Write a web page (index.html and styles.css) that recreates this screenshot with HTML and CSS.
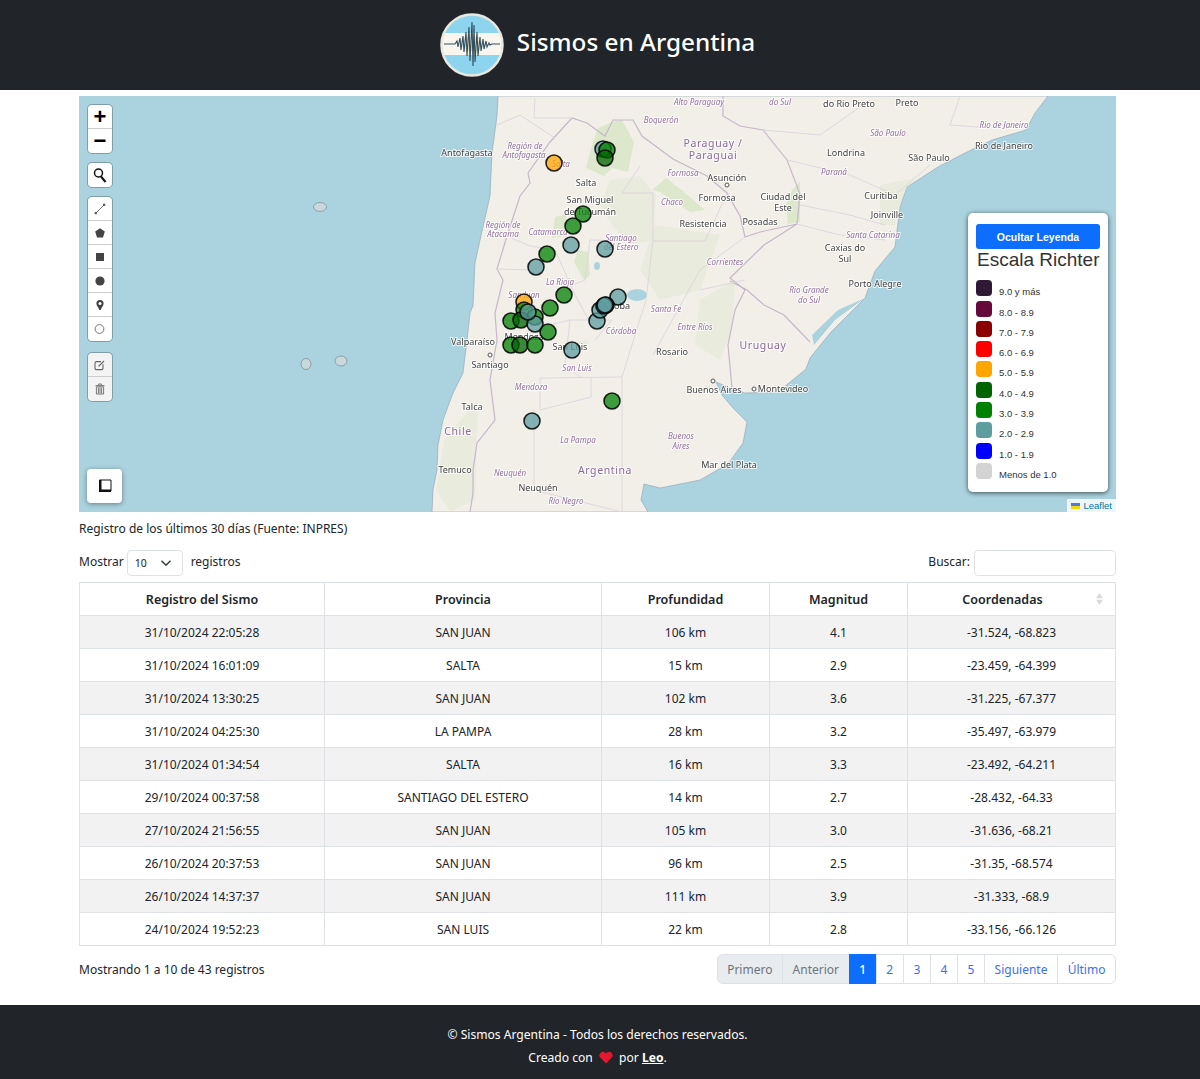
FILE: index.html
```html
<!DOCTYPE html>
<html lang="es">
<head>
  <meta charset="UTF-8">
  <meta name="viewport" content="width=device-width, initial-scale=1.0">
  <title>Sismos en Argentina</title>
  <link rel="stylesheet" href="styles.css">
</head>
<body>
  <header class="site-header">
    <svg class="logo" viewBox="0 0 64 64" width="64" height="64">
      <defs><clipPath id="logo-clip"><circle cx="32" cy="32" r="30"/></clipPath></defs>
      <g clip-path="url(#logo-clip)">
        <rect width="64" height="64" fill="#8dd4ee"/>
        <rect y="20" width="64" height="22" fill="#f8f6ee"/>
        <rect x="25" y="24" width="14" height="14" fill="#f2d9a8" opacity=".6"/>
      </g>
      <circle cx="32" cy="32" r="30.5" fill="none" stroke="#e8e8e0" stroke-width="2.5"/>
      <path d="M4 31H15L17 28L18 34L20 25L21 37L23 23L24 39L26 19L27 43L29 14L30 48L32 9L33 53L34 12L35 49L37 19L38 43L40 24L41 38L43 26L44 36L46 28L47 34L49 30L50 32L52 31H60" fill="none" stroke="#33505f" stroke-width="1.1"/>
    </svg>
    <h1 class="site-title">Sismos en Argentina</h1>
  </header>

  <main class="content">
    <div class="map">
      <svg class="map-base" viewBox="79 96 1037 416" width="1037" height="416">
        <rect x="79" y="96" width="1037" height="416" fill="#aad3df"/>
        <!-- tierra -->
        <path class="land" d="M498 96L497 116L492 153L490 196L480 240L475 263L473 306L470 313L467 340L463 373L453 393L443 420L438 445L437 470L433 490L432 512L648 512L641 500L644 484L660 488L700 480L728 464L743 443L747 422L733 408L722 395L716 382L730 388L745 393L778 392L806 369L810 358L831 332L865 298L875 271L895 247L900 207L907 187L938 167L965 153L992 140L1026 130L1035 113L1048 96Z"/>
        <!-- zonas verdes -->
        <path class="green" d="M598 128L612 122L622 120L634 142L628 172L612 168L604 176L586 168L592 145Z"/>
        <path class="green soft" d="M610 180L640 176L656 196L652 240L630 245L612 225L600 205Z"/>
        <path class="green" d="M652 190L666 178L684 192L705 210L690 212L660 192Z"/>
        <path class="green soft" d="M655 225L720 235L700 290L660 300L640 270Z"/>
        <path class="green" d="M555 217L566 214L566 236L552 238Z"/>
        <path class="green" d="M578 250L588 252L590 275L584 280L574 262Z"/>
        <path class="green soft" d="M700 300L735 280L732 330L720 360L695 345Z"/>
        <path class="green" d="M792 190L800 182L800 222L788 224L786 205Z"/>
        <path class="green soft" d="M880 185L915 178L905 192L895 225L880 225Z"/>
        <path class="green soft" d="M444 440L478 400L475 500L450 512L436 490Z"/>
        <path class="green soft" d="M565 345L588 340L585 350L570 352Z"/>
        <!-- limites -->
        <path class="border strong" d="M528 173L530 183L520 196L507 236L497 269L503 280L495 313L497 340L490 380L495 420L477 443L473 470L473 493L470 512"/>
        <path class="border strong" d="M528 173L550 142L572 118L587 123L605 136L613 120L633 120L642 136L673 159L707 176L727 193L740 216L745 237L760 232L797 224L764 245L730 278L745 290L735 310L728 345L732 388"/>
        <path class="border strong" d="M723 96L723 116L740 126L763 130L787 160L800 194L797 224M730 281L747 290L764 305L784 315L810 342"/>
        <path class="border" d="M497 125L520 115L555 138M535 98L534 118L572 118M622 193L653 193L653 241L705 241L727 193M622 193L640 166M653 241L646 300L622 377L622 512M622 377L540 378L540 410L591 397L591 377M534 410L534 490L622 512M581 378L565 365L570 320L612 320L595 340M560 290L585 280L590 240L625 241"/>
        <path class="border" d="M507 236L530 246L555 250L575 295L590 322M497 269L530 270M500 320L550 325L570 320M745 237L700 270L653 355M745 280L700 290"/>
        <path class="border" d="M763 130L820 135L870 100M787 160L850 175L895 195L930 165M800 205L850 215L885 225M797 224L840 235L885 240M960 96L950 125L990 128"/>
        <path class="water-line" d="M865 298L835 320L814 345L812 335L838 310Z"/>
        <ellipse class="lake" cx="637" cy="295" rx="10" ry="6"/>
        <ellipse class="lake" cx="597" cy="266" rx="3" ry="4"/>
        <ellipse class="island" cx="320" cy="207" rx="6.5" ry="4.5"/>
        <ellipse class="island" cx="306" cy="364" rx="5" ry="5.5"/>
        <ellipse class="island" cx="341" cy="361" rx="6" ry="5"/>
        <!-- etiquetas -->
        <g class="city">
          <text x="467" y="156">Antofagasta</text><text x="586" y="186">Salta</text>
          <text x="590" y="203">San Miguel</text><text x="590" y="215">de Tucumán</text>
          <text x="846" y="156">Londrina</text><text x="929" y="161">São Paulo</text>
          <text x="1004" y="149">Rio de Janeiro</text><text x="849" y="107">do Rio Preto</text>
          <text x="907" y="106">Preto</text><text x="727" y="181">Asunción</text>
          <text x="717" y="201">Formosa</text><text x="783" y="200">Ciudad del</text>
          <text x="783" y="211">Este</text><text x="703" y="227">Resistencia</text>
          <text x="760" y="225">Posadas</text><text x="881" y="199">Curitiba</text>
          <text x="887" y="218">Joinville</text><text x="845" y="251">Caxias do</text>
          <text x="845" y="262">Sul</text><text x="875" y="287">Porto Alegre</text>
          <text x="473" y="345">Valparaíso</text><text x="490" y="368">Santiago</text>
          <text x="472" y="410">Talca</text><text x="455" y="473">Temuco</text>
          <text x="538" y="491">Neuquén</text><text x="672" y="355">Rosario</text>
          <text x="714" y="393">Buenos Aires</text><text x="783" y="392">Montevideo</text>
          <text x="729" y="468">Mar del Plata</text><text x="524" y="340">Mendoza</text>
          <text x="570" y="350">San Luis</text><text x="612" y="309">Córdoba</text>
        </g>
        <g class="region">
          <text x="525" y="149">Región de</text><text x="524" y="158">Antofagasta</text>
          <text x="661" y="123">Boquerón</text><text x="699" y="105">Alto Paraguay</text>
          <text x="780" y="105">do Sul</text><text x="683" y="176">Formosa</text>
          <text x="672" y="205">Chaco</text><text x="503" y="228">Región de</text>
          <text x="503" y="237">Atacama</text><text x="548" y="235">Catamarca</text>
          <text x="621" y="241">Santiago</text><text x="621" y="250">del Estero</text>
          <text x="561" y="167">Salta</text><text x="560" y="285">La Rioja</text>
          <text x="524" y="298">San Juan</text><text x="531" y="390">Mendoza</text>
          <text x="577" y="371">San Luis</text><text x="621" y="334">Córdoba</text>
          <text x="666" y="312">Santa Fe</text><text x="695" y="330">Entre Ríos</text>
          <text x="578" y="443">La Pampa</text><text x="681" y="439">Buenos</text>
          <text x="681" y="449">Aires</text><text x="510" y="476">Neuquén</text>
          <text x="566" y="504">Río Negro</text><text x="888" y="136">São Paulo</text>
          <text x="834" y="175">Paraná</text><text x="1004" y="128">Rio de Janeiro</text>
          <text x="873" y="238">Santa Catarina</text><text x="809" y="293">Rio Grande</text>
          <text x="809" y="303">do Sul</text><text x="725" y="265">Corrientes</text>
        </g>
        <g class="country">
          <text x="713" y="147">Paraguay /</text><text x="713" y="159">Paraguai</text>
          <text x="458" y="435">Chile</text><text x="763" y="349">Uruguay</text>
          <text x="605" y="474">Argentina</text>
        </g>
        <circle class="dot" cx="713" cy="381" r="2"/><circle class="dot" cx="754" cy="389" r="2"/>
        <circle class="dot" cx="490" cy="355" r="2"/><circle class="dot" cx="727" cy="185" r="2"/>
        <!-- sismos -->
        <g class="quakes">
          <circle class="q2" cx="603" cy="149" r="8"/><circle class="q3" cx="607" cy="150" r="8"/>
          <circle class="q4" cx="605" cy="158" r="8"/><circle class="q5" cx="554" cy="163" r="8"/>
          <circle class="q3" cx="583" cy="214" r="8"/><circle class="q3" cx="573" cy="226" r="8"/>
          <circle class="q2" cx="571" cy="245" r="8"/><circle class="q2" cx="605" cy="249" r="8"/>
          <circle class="q3" cx="547" cy="254" r="8"/><circle class="q2" cx="536" cy="267" r="8"/>
          <circle class="q3" cx="564" cy="295" r="8"/><circle class="q5" cx="524" cy="302" r="8"/>
          <circle class="q2" cx="618" cy="297" r="8"/><circle class="q3" cx="550" cy="308" r="8"/>
          <circle class="q2" cx="597" cy="321" r="8"/><circle class="q2" cx="600" cy="310" r="8"/>
          <circle class="q2" cx="606" cy="305" r="8"/><circle class="q2" cx="604" cy="306" r="8"/>
          <circle class="q2" cx="605" cy="305" r="8"/><circle class="q3" cx="524" cy="310" r="8"/>
          <circle class="q3" cx="511" cy="321" r="8"/><circle class="q3" cx="535" cy="317" r="8"/>
          <circle class="q4" cx="521" cy="320" r="8"/><circle class="q2" cx="535" cy="324" r="8"/>
          <circle class="q2" cx="528" cy="312" r="8"/><circle class="q3" cx="548" cy="332" r="8"/>
          <circle class="q3" cx="511" cy="345" r="8"/><circle class="q4" cx="520" cy="345" r="8"/>
          <circle class="q3" cx="535" cy="345" r="8"/><circle class="q2" cx="572" cy="350" r="8"/>
          <circle class="q3" cx="612" cy="401" r="8"/><circle class="q2" cx="532" cy="421" r="8"/>
        </g>
      </svg>

      <div class="map-tools">
        <div class="tool-group">
          <a class="tool tool-zoom">+</a>
          <a class="tool tool-zoom">−</a>
        </div>
        <div class="tool-group">
          <a class="tool">
            <svg viewBox="0 0 16 16" width="16" height="16"><circle cx="6.5" cy="6" r="4" fill="none" stroke="#111" stroke-width="1.5"/><path d="M9 9.5L13.5 15" stroke="#111" stroke-width="2"/></svg>
          </a>
        </div>
        <div class="tool-group">
          <a class="tool"><svg viewBox="0 0 12 12" width="12" height="12"><path d="M1.5 10.5L10.5 1.5" stroke="#666" stroke-width=".9"/><rect x=".7" y="9" width="2.2" height="2.2" fill="#555"/><rect x="9" y=".7" width="2.2" height="2.2" fill="#555"/></svg></a>
          <a class="tool"><svg viewBox="0 0 12 12" width="12" height="12"><path d="M6 1.2L10.8 4.6L9 10.6H3L1.2 4.6Z" fill="#444"/></svg></a>
          <a class="tool"><svg viewBox="0 0 12 12" width="12" height="12"><rect x="2" y="2" width="8" height="8" fill="#444"/></svg></a>
          <a class="tool"><svg viewBox="0 0 12 12" width="12" height="12"><circle cx="6" cy="6" r="4.6" fill="#444"/></svg></a>
          <a class="tool"><svg viewBox="0 0 12 12" width="12" height="12"><path d="M6 1A3.6 3.6 0 0 1 9.6 4.6C9.6 7 7.3 8.5 6.7 11H5.3C4.7 8.5 2.4 7 2.4 4.6A3.6 3.6 0 0 1 6 1Z" fill="#444"/><circle cx="6" cy="4.5" r="1.5" fill="#fff"/></svg></a>
          <a class="tool"><svg viewBox="0 0 12 12" width="12" height="12"><circle cx="5.5" cy="6" r="4.4" fill="#fff" stroke="#777"/></svg></a>
        </div>
        <div class="tool-group tool-group-off">
          <a class="tool"><svg viewBox="0 0 12 12" width="12" height="12"><path d="M7 2.6H2.5A1.4 1.4 0 0 0 1 4V9.2A1.4 1.4 0 0 0 2.5 10.6H7.5A1.4 1.4 0 0 0 9 9.2V5.2" fill="none" stroke="#666" stroke-width="1.1"/><path d="M4.5 7.4L10 2" stroke="#666" stroke-width="1.3"/></svg></a>
          <a class="tool"><svg viewBox="0 0 12 12" width="12" height="12"><path d="M1.5 2.6H10.5M4.5 2.4V1H7.5V2.4M2.4 3.8H9.6V11H2.4ZM4.4 4.6V10.4M6 4.6V10.4M7.6 4.6V10.4" fill="none" stroke="#777"/></svg></a>
        </div>
      </div>

      <a class="corner-button">
        <svg viewBox="0 0 14 14" width="14" height="14"><path d="M1.5 1H13V12H1.5Z" fill="none" stroke="#111"/><path d="M1 1H3.5V10.5H13V13H1Z" fill="#111"/></svg>
      </a>

      <aside class="legend">
        <button class="legend-toggle">Ocultar Leyenda</button>
        <h4 class="legend-title">Escala Richter</h4>
        <ul class="legend-list">
          <li><i class="swatch sw-9"></i>9.0 y más</li>
          <li><i class="swatch sw-8"></i>8.0 - 8.9</li>
          <li><i class="swatch sw-7"></i>7.0 - 7.9</li>
          <li><i class="swatch sw-6"></i>6.0 - 6.9</li>
          <li><i class="swatch sw-5"></i>5.0 - 5.9</li>
          <li><i class="swatch sw-4"></i>4.0 - 4.9</li>
          <li><i class="swatch sw-3"></i>3.0 - 3.9</li>
          <li><i class="swatch sw-2"></i>2.0 - 2.9</li>
          <li><i class="swatch sw-1"></i>1.0 - 1.9</li>
          <li><i class="swatch sw-0"></i>Menos de 1.0</li>
        </ul>
      </aside>

      <div class="attribution">
        <svg viewBox="0 0 12 8" width="9" height="6"><rect width="12" height="4" fill="#4c7be1"/><rect y="4" width="12" height="4" fill="#ffd500"/></svg>
        <a>Leaflet</a>
      </div>
    </div>

    <p class="source">Registro de los últimos 30 días (Fuente: INPRES)</p>

    <div class="table-top">
      <div class="length">
        Mostrar
        <span class="select">10
          <svg viewBox="0 0 16 16" width="12" height="12"><path d="M2 5l6 6 6-6" fill="none" stroke="#343a40" stroke-width="2"/></svg>
        </span>
        registros
      </div>
      <div class="search">Buscar: <span class="search-box"></span></div>
    </div>

    <table class="quake-table">
      <colgroup>
        <col class="c1"><col class="c2"><col class="c3"><col class="c4"><col class="c5">
      </colgroup>
      <thead>
        <tr>
          <th>Registro del Sismo</th>
          <th>Provincia</th>
          <th>Profundidad</th>
          <th>Magnitud</th>
          <th class="sortable">Coordenadas
            <svg class="sort" viewBox="0 0 8 14" width="7" height="12"><path d="M4 0L8 6H0ZM4 14L0 8H8Z" fill="#d8dadd"/></svg>
          </th>
        </tr>
      </thead>
      <tbody>
        <tr><td>31/10/2024 22:05:28</td><td>SAN JUAN</td><td>106 km</td><td>4.1</td><td>-31.524, -68.823</td></tr>
        <tr><td>31/10/2024 16:01:09</td><td>SALTA</td><td>15 km</td><td>2.9</td><td>-23.459, -64.399</td></tr>
        <tr><td>31/10/2024 13:30:25</td><td>SAN JUAN</td><td>102 km</td><td>3.6</td><td>-31.225, -67.377</td></tr>
        <tr><td>31/10/2024 04:25:30</td><td>LA PAMPA</td><td>28 km</td><td>3.2</td><td>-35.497, -63.979</td></tr>
        <tr><td>31/10/2024 01:34:54</td><td>SALTA</td><td>16 km</td><td>3.3</td><td>-23.492, -64.211</td></tr>
        <tr><td>29/10/2024 00:37:58</td><td>SANTIAGO DEL ESTERO</td><td>14 km</td><td>2.7</td><td>-28.432, -64.33</td></tr>
        <tr><td>27/10/2024 21:56:55</td><td>SAN JUAN</td><td>105 km</td><td>3.0</td><td>-31.636, -68.21</td></tr>
        <tr><td>26/10/2024 20:37:53</td><td>SAN JUAN</td><td>96 km</td><td>2.5</td><td>-31.35, -68.574</td></tr>
        <tr><td>26/10/2024 14:37:37</td><td>SAN JUAN</td><td>111 km</td><td>3.9</td><td>-31.333, -68.9</td></tr>
        <tr><td>24/10/2024 19:52:23</td><td>SAN LUIS</td><td>22 km</td><td>2.8</td><td>-33.156, -66.126</td></tr>
      </tbody>
    </table>

    <div class="table-bottom">
      <div>Mostrando 1 a 10 de 43 registros</div>
      <nav class="pagination">
        <a class="disabled">Primero</a>
        <a class="disabled">Anterior</a>
        <a class="active">1</a>
        <a>2</a>
        <a>3</a>
        <a>4</a>
        <a>5</a>
        <a>Siguiente</a>
        <a>Último</a>
      </nav>
    </div>
  </main>

  <footer class="site-footer">
    <p>© Sismos Argentina - Todos los derechos reservados.</p>
    <p>Creado con
      <svg class="heart" viewBox="0 0 14 13" width="14" height="13"><path d="M7 12.5L1.2 6.6A3.5 3.5 0 0 1 6 1.6L7 2.6L8 1.6A3.5 3.5 0 0 1 12.8 6.6Z" fill="#e3172d"/></svg>
      por <a class="author">Leo</a>.</p>
  </footer>
</body>
</html>
```

FILE: styles.css
```css
* {
  box-sizing: border-box;
}
body {
  margin: 0;
  font-family: "Noto Sans", Arial, sans-serif;
  font-size: 12px;
  color: #212529;
  background-color: #fff;
}

/* cabecera */
.site-header {
  height: 90px;
  padding-right: 5px;
  display: flex;
  align-items: center;
  justify-content: center;
  gap: 13px;
  background-color: #212529;
}
.logo {
  flex: none;
}
.site-title {
  margin: 0 0 8px;
  font-size: 24.3px;
  font-weight: 500;
  color: #fff;
}

.content {
  margin: 6px 84px 0 79px;
}

/* mapa */
.map {
  position: relative;
  height: 416px;
  overflow: hidden;
}
.map-base {
  display: block;
  filter: blur(.4px);
}
.land {
  fill: #f2efe9;
  stroke: #8f9fb0;
  stroke-width: .6;
}
.green {
  fill: #d3e4bf;
  opacity: .7;
}
.green.soft {
  opacity: .3;
}
.border {
  fill: none;
  stroke: #ddd4dc;
  stroke-width: .9;
}
.border.strong {
  stroke: #c6b7ca;
  stroke-width: 1.2;
}
.water-line,
.lake {
  fill: #aad3df;
}
.island {
  fill: #c9d8da;
  stroke: #8f9fa8;
  stroke-width: 1;
}
.dot {
  fill: #fff;
  stroke: #555;
}
.city text,
.region text,
.country text {
  text-anchor: middle;
  paint-order: stroke;
  stroke: rgba(255, 255, 255, .75);
  stroke-width: 2px;
}
.city text {
  font-size: 9px;
  fill: #444;
}
.region text {
  font-size: 8px;
  font-style: italic;
  fill: #93719b;
}
.country text {
  font-size: 10.5px;
  letter-spacing: .6px;
  fill: #8a6a96;
}
.quakes circle {
  stroke: #000;
  stroke-width: 1.6;
  stroke-opacity: .85;
  fill-opacity: .75;
}
.q2 { fill: #5f9ea0; }
.q3 { fill: #008000; }
.q4 { fill: #006400; }
.q5 { fill: #ffa500; }

/* controles del mapa */
.map-tools {
  position: absolute;
  top: 9px;
  left: 9px;
  display: flex;
  flex-direction: column;
  gap: 10px;
}
.tool-group {
  width: 24px;
  border-radius: 4px;
  background-color: #fff;
  box-shadow: 0 0 0 1px rgba(0, 0, 0, .25);
}
.tool-group-off {
  margin-top: 2px;
  background-color: #f4f4f4;
}
.tool {
  height: 24px;
  display: flex;
  align-items: center;
  justify-content: center;
  border-bottom: 1px solid #ccc;
}
.tool:last-child {
  border-bottom: none;
}
.tool-zoom {
  font: bold 22px "Liberation Sans", Arial, sans-serif;
  color: #000;
}
.corner-button {
  position: absolute;
  left: 8px;
  bottom: 9px;
  width: 35px;
  height: 34px;
  display: flex;
  align-items: center;
  justify-content: center;
  border-radius: 4px;
  background-color: #fff;
  box-shadow: 0 1px 5px rgba(0, 0, 0, .4);
}
.legend {
  position: absolute;
  top: 117px;
  right: 8px;
  width: 140px;
  height: 279px;
  padding: 11px 8px;
  border-radius: 5px;
  background-color: #fff;
  box-shadow: 0 1px 5px rgba(0, 0, 0, .65);
  font-family: "Liberation Sans", Arial, sans-serif;
}
.legend-toggle {
  display: block;
  width: 124px;
  height: 25px;
  padding: 0;
  border: none;
  border-radius: 3px;
  background-color: #0d6efd;
  color: #fff;
  font: bold 10.5px "Liberation Sans", Arial, sans-serif;
}
.legend-title {
  margin: -1px 0 8px;
  padding-left: 1px;
  font-size: 19px;
  font-weight: 400;
  line-height: 24px;
  white-space: nowrap;
  color: #333;
}
.legend-list {
  margin: 0;
  padding: 0;
  list-style: none;
  font-size: 9.5px;
  color: #333;
}
.legend-list li {
  height: 20.3px;
  padding-bottom: 3px;
  display: flex;
  align-items: flex-end;
  gap: 7px;
  line-height: 10px;
}
.swatch {
  width: 16px;
  height: 16px;
  margin-bottom: 1px;
  border-radius: 4px;
}
.sw-9 { background-color: #301934; }
.sw-8 { background-color: #660a3c; }
.sw-7 { background-color: #8b0000; }
.sw-6 { background-color: #f00; }
.sw-5 { background-color: #ffa500; }
.sw-4 { background-color: #006400; }
.sw-3 { background-color: #008000; }
.sw-2 { background-color: #5f9ea0; }
.sw-1 { background-color: #00f; }
.sw-0 { background-color: #d3d3d3; }
.attribution {
  position: absolute;
  right: 0;
  bottom: 0;
  height: 13px;
  padding: 0 4px;
  display: flex;
  align-items: center;
  gap: 3px;
  background-color: rgba(255, 255, 255, .8);
  font: 9.5px "Liberation Sans", Arial, sans-serif;
  color: #0078a8;
}

/* tabla */
.source {
  margin: 9px 0 0;
  line-height: 16px;
}
.table-top,
.table-bottom {
  display: flex;
  align-items: center;
  justify-content: space-between;
}
.table-top {
  margin-top: 13px;
  height: 26px;
}
.length,
.search {
  padding-bottom: 3px;
  display: flex;
  align-items: center;
  gap: 3px;
}
.select {
  width: 56px;
  height: 26px;
  margin: 0 5px -3px 0;
  padding: 0 10px 0 7px;
  display: flex;
  align-items: center;
  justify-content: space-between;
  border: 1px solid #dee2e6;
  border-radius: 4px;
  font-size: 10.5px;
}
.search-box {
  display: block;
  width: 142px;
  height: 26px;
  margin-bottom: -3px;
  margin-left: 1px;
  border: 1px solid #dee2e6;
  border-radius: 4px;
}
.quake-table {
  width: 1036px;
  margin-top: 6px;
  border-collapse: collapse;
  table-layout: fixed;
}
.c1 { width: 245px; }
.c2 { width: 277px; }
.c3 { width: 168px; }
.c4 { width: 138px; }
.c5 { width: 208px; }
.quake-table th,
.quake-table td {
  height: 33px;
  padding: 0 8px;
  border: 1px solid #dee2e6;
  text-align: center;
}
.quake-table th {
  font-size: 12.5px;
  font-weight: 600;
}
.quake-table tbody tr:nth-child(odd) {
  background-color: #f2f2f2;
}
.sortable {
  position: relative;
}
.quake-table .sortable {
  padding-right: 26px;
}
.sort {
  position: absolute;
  top: 10px;
  right: 12px;
}
.table-bottom {
  margin-top: 8px;
  height: 30px;
}
.pagination {
  display: flex;
  height: 30px;
}
.pagination a {
  padding: 0 9.6px;
  display: flex;
  align-items: center;
  justify-content: center;
  border: 1px solid #dee2e6;
  margin-left: -1px;
  color: #3b6ef5;
}
.pagination a:first-child {
  border-radius: 6px 0 0 6px;
}
.pagination a:last-child {
  border-radius: 0 6px 6px 0;
}
.pagination .disabled {
  background-color: #e9ecef;
  color: #6c757d;
}
.pagination .active {
  background-color: #0d6efd;
  border-color: #0d6efd;
  color: #fff;
  font-weight: 500;
}

/* pie */
.site-footer {
  height: 74px;
  margin-top: 21px;
  padding: 21px 5px 0 0;
  background-color: #212529;
  color: #fff;
  font-size: 12.1px;
  text-align: center;
}
.site-footer p {
  margin: 0 0 6px;
  line-height: 17px;
}
.heart {
  margin: 0 3px;
  vertical-align: -2px;
}
.author {
  font-weight: 700;
  text-decoration: underline;
}
```
